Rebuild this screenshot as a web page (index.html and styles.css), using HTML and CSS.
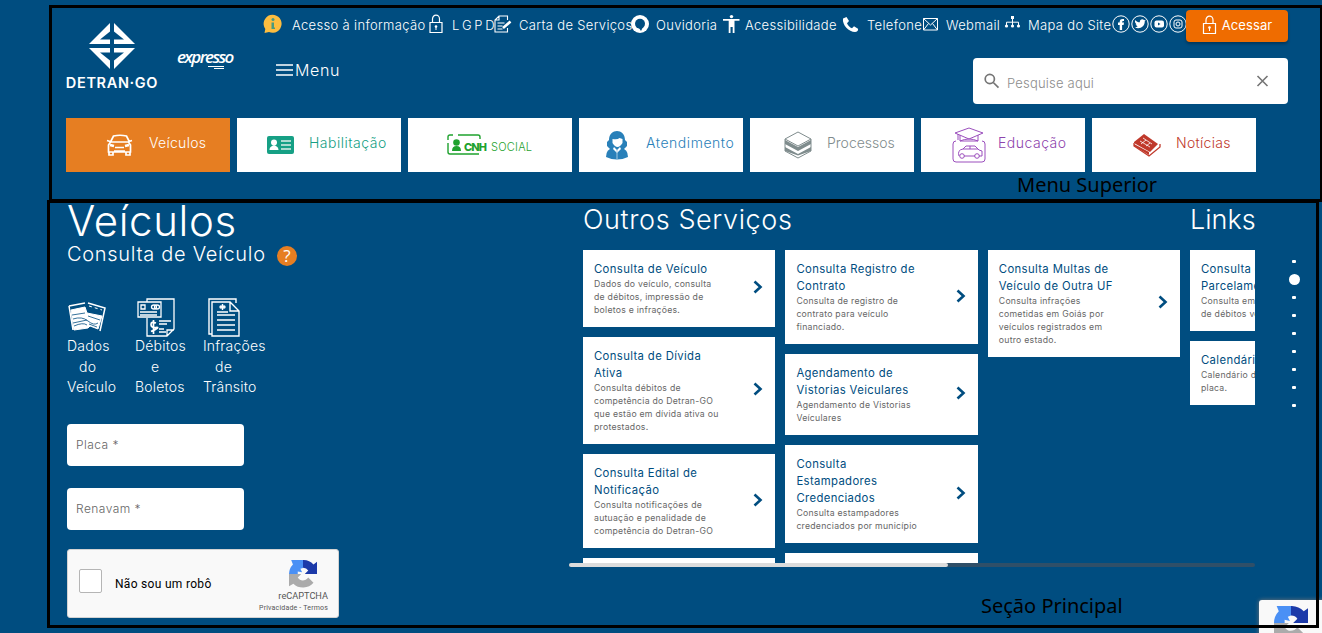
FILE: index.html
```html
<!DOCTYPE html>
<html lang="pt-BR">
<head>
<meta charset="utf-8">
<title>Detran-GO</title>
<link rel="stylesheet" href="styles.css">
</head>
<body>
<svg class="defs" width="0" height="0">
  <symbol id="lock" viewBox="0 0 14 20"><path d="M1 8.5h12v10H1zM3.5 8.500V5a3.500 3.900 0 0 1 7 0v3.500" fill="none" stroke="currentColor" stroke-width="1.200"/><circle cx="7" cy="12.500" r="1.300" fill="currentColor"/><path d="M7 12v4" stroke="currentColor"/></symbol>
  <symbol id="chev" viewBox="0 0 10 14"><path d="M1.500 1.500L7.500 7l-6 5.500" fill="none" stroke="#004d80" stroke-width="2.600"/></symbol>
  <symbol id="captcha" viewBox="0 0 32 32">
    <path d="M0 16A16 16 0 0 1 4.500 5L2.500 0H16v9l-3 1 2 4-5-1v3z" fill="#4a90f5"/>
    <path d="M16 0a16 16 0 0 1 12 5l4-3v14H18l4-4a7 7 0 0 0-6-3z" fill="#1c3aa9"/>
    <path d="M0 16h14l-4 4c3 5 9 4 12 0l6 6A16 16 0 0 1 5 27l-5 3z" fill="#ababab"/>
  </symbol>
</svg>
<div class="page">
  <header class="header">
    <div class="brand">
      <div class="detran">
        <svg width="46" height="46" viewBox="0 0 46 46" fill="#fff"><path d="M21 0v21H0zM25 0v21h21zM0 25h21v21zM25 25h21L25 46z"/><path d="M21 8.500v8h-10zM25 8.500v8h10zM11 29.500h10v8zM25 29.500h10l-10 8z" fill="#004d80"/></svg>
        <span>DETRAN·GO</span>
      </div>
      <div class="expresso">expresso<i></i><i class="short"></i></div>
    </div>
    <div class="head-main">
      <div class="toprow">
        <nav class="links">
          <a class="info"><svg width="20" height="20" viewBox="0 0 20 20"><path d="M1.500 19l.8-4A9 9 0 1 1 6 18z" fill="#fdbd40"/><circle cx="10" cy="5.500" r="1.500" fill="#4a9a80"/><path d="M8.500 8.500H11v5h1V15H8.500z" fill="#4a9a80"/></svg>Acesso à informação</a>
          <a class="lgpd"><svg width="14" height="20"><use href="#lock"/></svg>L G P D</a>
          <a><svg width="19" height="20" viewBox="0 0 19 20" fill="none" stroke="#fff" stroke-width="1.100"><path d="M13.500 6V2H5L1 6v12h12.500v-4M5 2v4H1M3.500 9h7M3.500 12h5M3.500 15h5"/><path d="M9 14l7.500-6.500" stroke-width="2.600"/></svg>Carta de Serviços</a>
          <a><svg width="19" height="20" viewBox="0 0 19 20"><circle cx="9" cy="10" r="9" fill="#fff"/><circle cx="9" cy="9.700" r="5" fill="#004d80"/><path d="M8 14h3.500L10 17z" fill="#004d80"/></svg>Ouvidoria</a>
          <a><svg width="18" height="20" viewBox="0 0 18 20" fill="#fff"><circle cx="8.500" cy="2.600" r="1.700"/><path d="M0 5h16.500v1.800h-5V19H9.700v-6H7.500v6H5.700V6.800H0z"/></svg>Acessibilidade</a>
          <a><svg width="18" height="20" viewBox="0 0 18 20" fill="#fff"><path d="M1 4.500L4.500 3 7 7 5 9.200c1.200 2.500 2.600 4 5 5l2-2 4 2.500c.6 1.500-1 3.300-3 3.300C7 18 0 11 1 4.500z"/></svg>Telefone</a>
          <a><svg width="17" height="20" viewBox="0 0 17 20" fill="none" stroke="#fff"><path d="M1.500 4.500h14V16h-14zM1.500 4.500l7 6.500 7-6.500M1.500 16l5-6.500M15.500 16l-5-6.500"/></svg>Webmail</a>
          <a><svg width="18" height="20" viewBox="0 0 18 20" fill="#fff"><path d="M2.500 11V8.200h12V11M8.500 4v7" fill="none" stroke="#fff"/><path d="M7 2h3v3H7z"/><circle cx="2.500" cy="12" r="1.600"/><circle cx="8.500" cy="12" r="1.600"/><circle cx="14.500" cy="12" r="1.600"/></svg>Mapa do Site</a>
        </nav>
        <div class="social">
          <svg viewBox="0 0 18 18"><circle cx="9" cy="9" r="8.200"/><path class="f" d="M7.700 15V10H6V7.500h1.700C7.500 4.500 9 3.500 12 4v2c-1.500 0-2 .2-1.900 1.500H12L11.600 10h-1.500v5z"/></svg>
          <svg viewBox="0 0 18 18"><circle cx="9" cy="9" r="8.200"/><path class="f" d="M4 5c1.500 1.600 3 2.300 4.800 2.300 0-3.300 3.100-3.600 4.400-2l1.500-.6-1 1.800C14 11 9 15 4 12.500l2.600-1L4.500 9.500h1L4 7.300z"/></svg>
          <svg viewBox="0 0 18 18"><circle cx="9" cy="9" r="8.200"/><rect class="f" x="4.500" y="5.500" width="9.500" height="7" rx="2"/><path d="M8 7.500v3l2.500-1.500z" fill="#004d80" stroke="none"/></svg>
          <svg viewBox="0 0 18 18"><circle cx="9" cy="9" r="8.200"/><rect x="5" y="5" width="8" height="8" rx="2"/><circle cx="9" cy="9" r="2"/></svg>
        </div>
        <button class="login"><svg width="15" height="20"><use href="#lock"/></svg>Acessar</button>
      </div>
      <div class="menurow">
        <div class="menu"><svg width="18" height="12" viewBox="0 0 18 12"><path d="M0 1h17M0 6h17M0 11h17" stroke="#fff" stroke-width="1.700"/></svg>Menu</div>
        <div class="search">
          <svg width="17" height="17" viewBox="0 0 17 17" fill="none" stroke="#757575" stroke-width="1.700"><circle cx="5.800" cy="6" r="4.600"/><path d="M9.300 9.500l5.200 5.200"/></svg>
          <span>Pesquise aqui</span>
          <svg width="14" height="14" viewBox="0 0 14 14" stroke="#757575" stroke-width="1.600"><path d="M1.500 2l10 10M11.500 2l-10 10"/></svg>
        </div>
      </div>
    </div>
  </header>

  <nav class="tabs">
    <a class="tab t1"><svg width="28" height="24" viewBox="0 0 28 24" fill="none" stroke="#fff" stroke-width="1.700"><path d="M4.500 9L7.500 3q6.500-1.500 13 0l3 6M1 7.500l3 1M26 7.500l-3 1M4.500 9h18l2 3v7h-22v-7zM3 19v3h4v-3M20 19v3h4v-3M9 14.500h9M8 18h11"/><path d="M4 12l4 1M23 12l-4 1" stroke-width="2.500"/></svg><span>Veículos</span></a>
    <a class="tab t2"><svg width="28" height="20" viewBox="0 0 28 20"><rect x="0" y="1" width="27" height="18" rx="2" fill="#16a085"/><circle cx="7" cy="7.500" r="3" fill="#fff"/><path d="M2.500 15c0-3 2.500-4 4.500-5 2 1 4.500 2 4.500 5z" fill="#fff"/><path d="M14 6h10M14 10h10M14 14h10" stroke="#a9dace" stroke-width="1.800"/></svg><span>Habilitação</span></a>
    <a class="tab t3"><svg width="86" height="22" viewBox="0 0 86 22"><path d="M6 1H3Q1 1 1 3v3M1 9v9q0 2 2 2h29M11 1h20q2 0 2 2v2" fill="none" stroke="#1fa22e" stroke-width="1.400"/><circle cx="9.500" cy="8.500" r="3.300" fill="#1fa22e"/><path d="M5 17q0-5 4.500-5t4.500 5z" fill="#1fa22e"/><text x="17" y="16.500" textLength="23" class="cnh">CNH</text><text x="44" y="16.500" textLength="41" class="soc">SOCIAL</text></svg></a>
    <a class="tab t4"><svg width="24" height="30" viewBox="0 0 24 30" fill="#2980b9"><path d="M4 10C4-2 20-2 20 10l2 2v4l-3 3H5l-3-3v-4zM1 27q0-8 7-9h8q7 1 7 9-11 5-22 0z"/><path d="M7.500 9q5 1 7-1l3 1v4q-5 8-10 0z" fill="#fff"/><path d="M9 17l3 3 3-3 1 2-4 4-4-4z" fill="#fff"/><path d="M12 20v9" stroke="#a9cce3"/></svg><span>Atendimento</span></a>
    <a class="tab t5"><svg width="28" height="28" viewBox="0 0 28 28"><path d="M14 1l13 7-13 7L1 8zM1 8v12l13 7 13-7V8" fill="#fff" stroke="#7f8c8d"/><path d="M1 9l13 7 13-7v4l-13 7-13-7zM1 16l13 7 13-7v4l-13 4.500L1 20z" fill="#7f8c8d"/></svg><span>Processos</span></a>
    <a class="tab t6"><svg width="34" height="36" viewBox="0 0 34 36" fill="none" stroke="#9b4fbd"><path d="M17 1l14 5-14 6L3 6zM8 8v6q9-4 18 0V8M6 7v6M8 14h18M4 14q-3 0-3 3v15q0 3 3 3h26q3 0 3-3V17q0-3-3-3"/><path d="M7 29q-2-6 4-7l3-3h9l4 4 3 1v5h-3M12 29h11M11 22h15M18 19v3"/><circle cx="10" cy="29" r="2.300"/><circle cx="25" cy="29" r="2.300"/></svg><span>Educação</span></a>
    <a class="tab t7"><svg width="28" height="24" viewBox="0 0 28 24"><path d="M11 1L25 11 17 19 1 10V9z" fill="#c0392b"/><path d="M1 10v3l15 10 11-9v-3" fill="none" stroke="#c0392b" stroke-width="1.300"/><path d="M1 11v2l15 9v-3z" fill="#c0392b"/><path d="M10 5l9 6M7 8l10 6M13 7l-5 4M17 10l-4 3" stroke="#fff" stroke-width=".8"/></svg><span>Notícias</span></a>
  </nav>

  <main class="main">
    <section class="query">
      <h1>Veículos</h1>
      <h2><span>Consulta de Veículo</span><b>?</b></h2>
      <div class="options">
        <div class="option">
          <svg width="40" height="40" viewBox="0 0 40 40" fill="none" stroke="#fff"><path d="M2 8l16-3M2 8l4 24M21 5l17 5-5 23" stroke-width="1.500"/><path d="M4 12l14-3 2 6 15 3-4 13-8-3-2 2-14 2z" fill="#fff"/><path d="M5 17l13-2M6 21q9-3 15 2t10 2M6 25l14-3M21 18l12 4M7 28q9-4 13-1M22 26l8 3" stroke="#004d80" stroke-width=".8"/><path d="M22 8l13 4" stroke-dasharray="3 3"/></svg>
          <p>Dados<br><i>do</i><br>Veículo</p>
        </div>
        <div class="option o2">
          <svg width="40" height="40" viewBox="0 0 40 40" fill="none" stroke="#fff" stroke-width="1.300"><path d="M12 4V1h27v30l-7 7H12V20M32 38v-6h7M3 4h23v15H3zM6 7h4v4H6zM5 14h17M5 17h17M24 23h12M24 26h8M24 31h5M24 34h7"/><ellipse cx="19" cy="9" rx="2.500" ry="2"/><ellipse cx="22" cy="9" rx="2.500" ry="2"/><path d="M21 25q-5-2-5 1.500t5 3-5 4M18.500 22v14" stroke-width="1.700"/></svg>
          <p>Débitos<br><i>e</i><br>Boletos</p>
        </div>
        <div class="option">
          <svg width="40" height="40" viewBox="0 0 40 40" fill="none" stroke="#fff" stroke-width="1.400"><path d="M4 36H1V1h27v4M4 36V4h18l9 9v25H4zM22 4v9h9M9 17h18M9 22h18M9 27h18M9 32h18M9 14h11"/><circle cx="13" cy="9" r="1" /><circle cx="16" cy="9" r="1"/><path d="M14.500 6v6"/></svg>
          <p>Infrações<br><i>de</i><br>Trânsito</p>
        </div>
      </div>
      <div class="field">Placa *</div>
      <div class="field">Renavam *</div>
      <div class="captcha">
        <span class="check"></span><span class="robot">Não sou um robô</span>
        <div class="cap-brand"><svg width="28" height="28"><use href="#captcha"/></svg><span>reCAPTCHA</span><small>Privacidade - Termos</small></div>
      </div>
    </section>

    <section class="services">
      <div class="scroller">
        <div class="group wide">
          <h3>Outros Serviços</h3>
          <div class="cols">
            <div class="col">
              <article><div><h4>Consulta de Veículo</h4><p>Dados do veículo, consulta<br>de débitos, impressão de<br>boletos e infrações.</p></div><svg><use href="#chev"/></svg></article>
              <article><div><h4>Consulta de Dívida<br>Ativa</h4><p>Consulta débitos de<br>competência do Detran-GO<br>que estão em dívida ativa ou<br>protestados.</p></div><svg><use href="#chev"/></svg></article>
              <article><div><h4>Consulta Edital de<br>Notificação</h4><p>Consulta notificações de<br>autuação e penalidade de<br>competência do Detran-GO</p></div><svg><use href="#chev"/></svg></article>
              <article class="rest"></article>
            </div>
            <div class="col">
              <article><div><h4>Consulta Registro de<br>Contrato</h4><p>Consulta de registro de<br>contrato para veículo<br>financiado.</p></div><svg><use href="#chev"/></svg></article>
              <article><div><h4>Agendamento de<br>Vistorias Veiculares</h4><p>Agendamento de Vistorias<br>Veículares</p></div><svg><use href="#chev"/></svg></article>
              <article><div><h4>Consulta<br>Estampadores<br>Credenciados</h4><p>Consulta estampadores<br>credenciados por município</p></div><svg><use href="#chev"/></svg></article>
              <article class="rest"></article>
            </div>
            <div class="col">
              <article><div><h4>Consulta Multas de<br>Veículo de Outra UF</h4><p>Consulta infrações<br>cometidas em Goiás por<br>veículos registrados em<br>outro estado.</p></div><svg><use href="#chev"/></svg></article>
            </div>
          </div>
        </div>
        <div class="group">
          <h3>Links</h3>
          <div class="col">
            <article><div><h4>Consulta de<br>Parcelamento</h4><p>Consulta emissão<br>de débitos veiculares</p></div></article>
            <article><div><h4>Calendário</h4><p>Calendário de<br>placa.</p></div></article>
          </div>
        </div>
      </div>
      <div class="bar"><i></i></div>
    </section>
    <nav class="dots"><i></i><i class="on"></i><i></i><i></i><i></i><i></i><i></i><i></i><i></i></nav>
  </main>

  <div class="badge"><svg width="34" height="34"><use href="#captcha"/></svg></div>
  <div class="frame top"></div>
  <div class="frame body"></div>
  <div class="note n1">Menu Superior</div>
  <div class="note n2">Seção Principal</div>
</div>
</body>
</html>
```

FILE: styles.css
```css
* { box-sizing: border-box; }
body { margin: 0; font-family: Inter, "Open Sans", sans-serif; color: #fff; }
h1, h2, h3, h4, p { margin: 0; font-weight: 300; }
svg { flex: none; }
.defs { position: absolute; }
.page { position: relative; width: 1322px; height: 633px; overflow: hidden; background: #004d80; }

.header { display: flex; height: 118px; padding-left: 66px; }
.brand { display: flex; width: 197px; }
.detran { width: 92px; padding-top: 23px; display: flex; flex-direction: column; align-items: center; }
.detran span { font-size: 14.5px; font-weight: 600; line-height: 16px; margin-top: 6px; letter-spacing: .65px; white-space: nowrap; }
.expresso { margin: 47px 0 0 19px; width: 57px; height: 24px; font: italic 600 17px/20px "Open Sans", sans-serif; letter-spacing: -1.6px; }
.expresso i { display: block; width: 16px; height: 1px; margin: -1px 0 0 31px; background: #fff; }
.expresso .short { width: 10px; margin: 1px 0 0 37px; }

.head-main { flex: 1; }
.toprow { display: flex; height: 42px; padding-top: 10px; }
.links { display: grid; grid-template-columns: 166px 65px 137px 92px 119px 80px 82px 108px; height: 30px; font-size: 13px; font-weight: 300; letter-spacing: .33px; }
.links a { display: flex; align-items: center; white-space: nowrap; }
.links svg { margin: -2px 5px 0 0; }
.links a:nth-child(2) svg { margin-right: 9px; }
.links a:nth-child(3) svg { margin-right: 6px; }
.links a:nth-child(6) svg, .links a:nth-child(7) svg { margin-right: 7px; }
.links a:nth-child(4) svg { margin-right: 6px; }
.links a:nth-child(5) svg { margin-right: 4px; }
.links a:nth-child(8) svg { margin-right: 6px; }
.links .info svg { margin-right: 9px; }
.links .lgpd { letter-spacing: -.5px; }
.social { display: flex; width: 74px; gap: 1px; padding: 5px 0 0; }
.social svg { width: 18px; height: 18px; fill: none; stroke: #fff; }
.social .f { fill: #fff; stroke: none; }
.login { width: 102px; height: 32px; border: 0; border-radius: 4px; background: #ef6c00; color: #fff; display: flex; align-items: center; justify-content: center; gap: 5px; font: 400 13px Inter, sans-serif; letter-spacing: .1px; padding: 0 0 2px; box-shadow: 0 2px 3px rgba(0, 0, 0, .3); }
.menurow { display: flex; padding: 16px 0 0 13px; }
.menu { display: flex; width: 697px; height: 24px; align-items: center; gap: 1px; font-size: 16px; font-weight: 300; letter-spacing: .6px; }
.search { width: 315px; height: 46px; border-radius: 4px; background: #fff; color: #8d8d8d; display: flex; align-items: center; padding: 0 18px 0 11px; font-size: 13px; font-weight: 300; letter-spacing: .2px; }
.search span { flex: 1; padding: 4px 0 0 6px; }

.tabs { display: flex; gap: 7px; padding-left: 66px; }
.tab { width: 164px; height: 54px; background: #fff; display: flex; align-items: center; font-size: 14px; font-weight: 300; letter-spacing: .3px; white-space: nowrap; }
.tab span { margin-top: -5px; }
.t1 { background: #e67e22; padding-left: 40px; gap: 15px; }
.t2 { color: #16a085; padding-left: 30px; gap: 14px; letter-spacing: .5px; }
.t3 { padding-left: 39px; letter-spacing: 0; }
.t4 { color: #2980b9; padding-left: 26px; gap: 17px; letter-spacing: .55px; }
.t5 { color: #7f8c8d; padding-left: 34px; gap: 15px; letter-spacing: 0; }
.t6 { color: #8e44ad; padding-left: 31px; gap: 12px; letter-spacing: .5px; }
.t7 { color: #c0392b; padding-left: 41px; gap: 15px; }
.cnh { font: 800 11px Inter, sans-serif; fill: #1fa22e; }
.soc { font: 300 11px Inter, sans-serif; fill: #1fa22e; }

.main { display: flex; height: 461px; padding: 28px 0 0 67px; }
.query { width: 502px; flex: none; }
h1 { height: 42px; font-size: 42px; line-height: 42px; letter-spacing: .6px; }
h2 { display: flex; align-items: center; height: 26px; font-size: 20px; gap: 12px; line-height: 24px; letter-spacing: .7px; }
h2 span { width: 198px; margin-top: -2px; white-space: nowrap; }
h2 b { width: 20px; height: 20px; margin-top: 2px; border-radius: 50%; background: #e67e22; text-align: center; font: 400 17px/20px "Open Sans", sans-serif; letter-spacing: 0; }
.options { display: flex; margin-top: 30px; height: 126px; }
.option { width: 68px; font-size: 14px; line-height: 20.5px; letter-spacing: .2px; }
.option svg { display: block; }
.option p { margin-top: -2px; white-space: nowrap; }
.option i { font-style: normal; padding-left: 12px; }
.o2 i { padding-left: 16px; }
.option:last-child svg { margin-left: 5px; }
.field { width: 177px; height: 42px; margin-bottom: 22px; padding-left: 9px; border-radius: 4px; background: #fff; color: #666; font-size: 12px; font-weight: 300; line-height: 42px; letter-spacing: .45px; }
.captcha { display: flex; width: 272px; height: 69px; margin-top: -3px; background: #f9f9f9; border: 1px solid #d3d3d3; border-radius: 3px; color: #000; font-family: Roboto, sans-serif; }
.check { width: 23px; height: 24px; margin: 19px 0 0 11px; border: 1px solid #b5b5b5; border-radius: 2px; background: #fff; }
.robot { flex: 1; margin-left: 13px; font-size: 12px; line-height: 68px; letter-spacing: .3px; }
.cap-brand { width: 90px; padding: 10px 10px 0 0; display: flex; flex-direction: column; align-items: flex-end; color: #555; white-space: nowrap; }
.cap-brand svg { margin-right: 11px; }
.cap-brand span { font-size: 9.200px; line-height: 16px; }
.cap-brand small { font-size: 7px; line-height: 8px; letter-spacing: .18px; }

.services { width: 686px; flex: none; }
.scroller { display: flex; gap: 10px; height: 363px; padding-left: 14px; overflow: hidden; }
.group { flex: none; width: 192px; }
.wide { width: 597px; }
h3 { height: 50px; font-size: 27px; line-height: 40px; }
.wide h3 { letter-spacing: .6px; }
.cols { display: flex; gap: 10px; }
.col { display: flex; flex-direction: column; gap: 10px; width: 192.4px; flex: none; }
article { display: flex; align-items: center; justify-content: space-between; background: #fff; padding: 10.500px 12px 10.500px 11px; white-space: nowrap; }
article svg { width: 10px; height: 14px; margin-top: -3px; }
.rest { height: 60px; }
h4 { color: #004d80; font-size: 11.300px; font-weight: 400; line-height: 17px; letter-spacing: .37px; }
article p { color: #666; font-size: 8.700px; font-weight: 400; line-height: 13px; letter-spacing: .25px; }
.bar { height: 4px; border-radius: 2px; background: #2f4f68; }
.bar i { display: block; width: 379px; height: 4px; border-radius: 2px; background: #dcdcdc; }
.dots { width: 67px; padding: 52px 0 0 11px; flex: none; display: flex; flex-direction: column; align-items: center; }
.dots i { width: 4px; height: 3px; margin: 7.500px 0; border-radius: 1px; background: #fff; }
.dots .on { width: 11px; height: 11px; margin: 3.500px 0; border-radius: 50%; }

.badge { position: absolute; left: 1259px; top: 600px; width: 70px; height: 60px; padding: 6px 15px; border-radius: 3px; background: #f9f9f9; box-shadow: 0 0 4px #777; }
.frame { position: absolute; border: 3px solid #000; }
.frame.top { left: 49px; top: 5px; width: 1274px; height: 197px; }
.frame.body { left: 47px; top: 200px; width: 1272px; height: 428px; }
.note { position: absolute; color: #000; font: 400 20px/24px "Noto Sans", sans-serif; white-space: nowrap; }
.n1 { left: 1017px; top: 173px; }
.n2 { left: 981px; top: 594px; }
```
